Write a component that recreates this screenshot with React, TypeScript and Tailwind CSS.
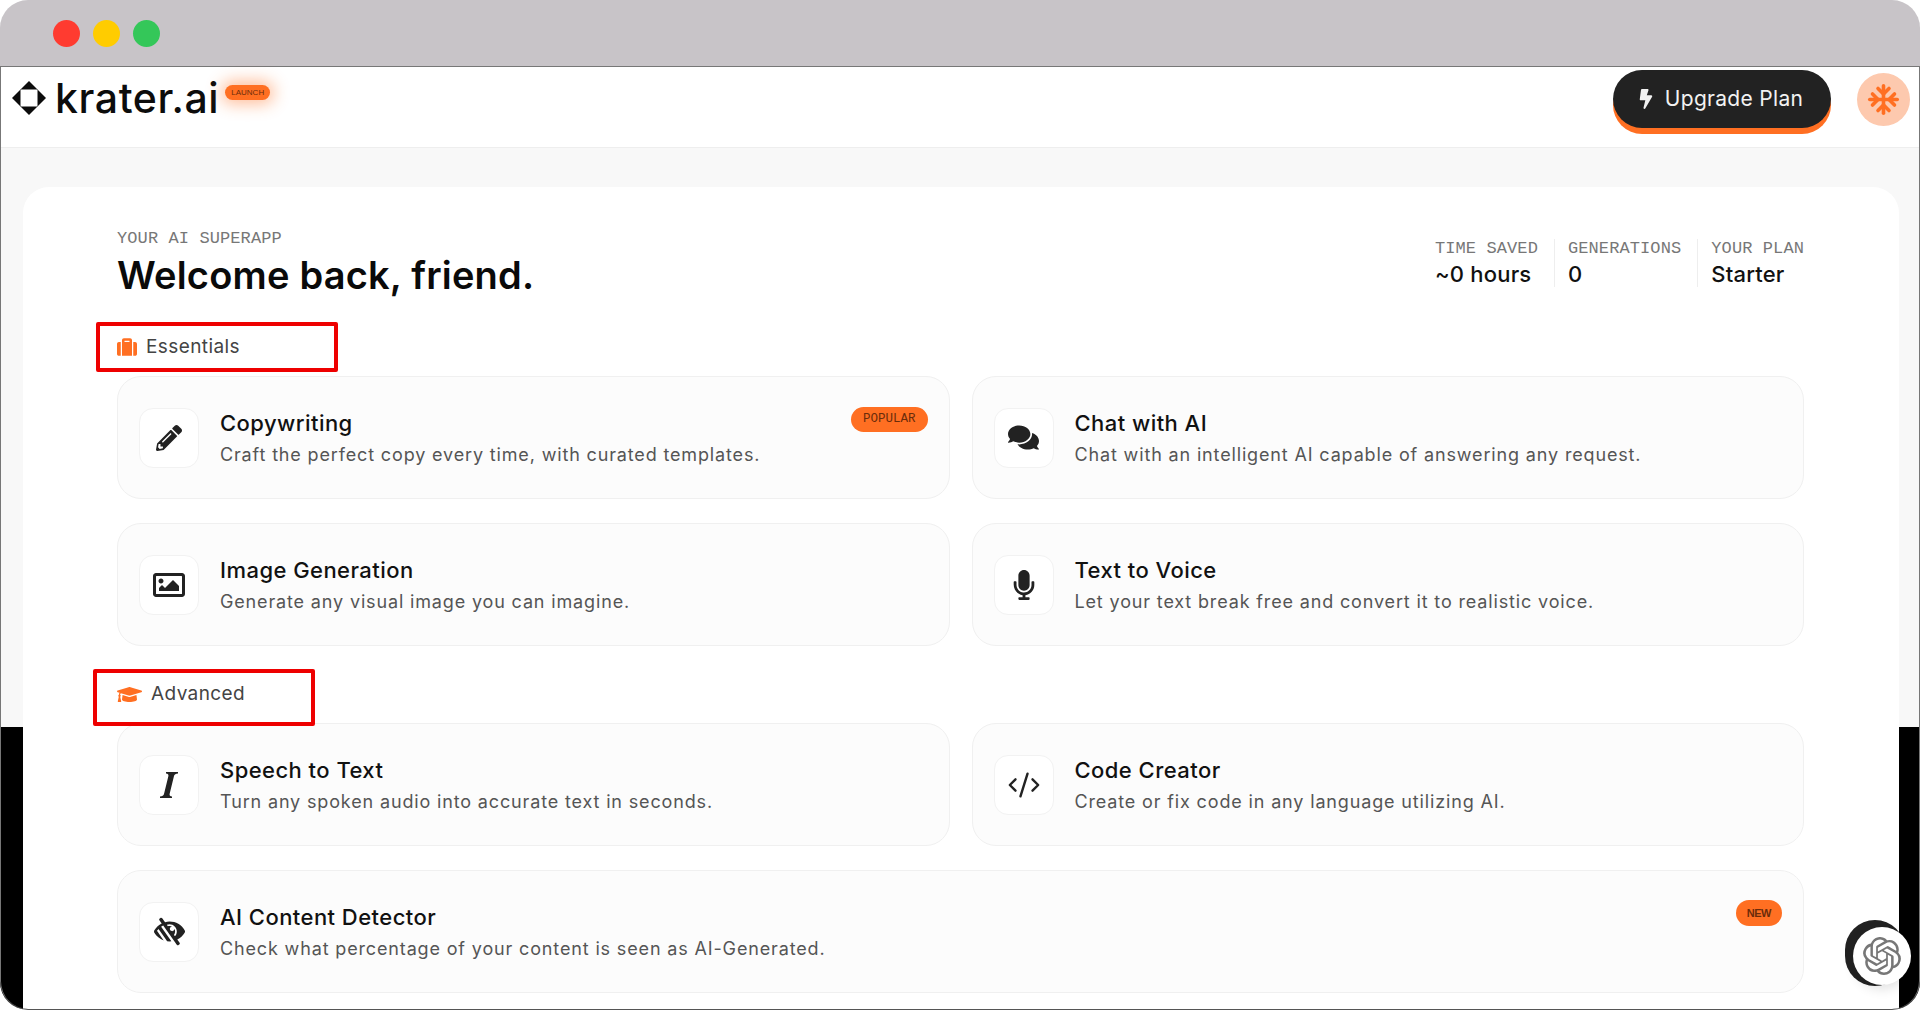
import {
  FaBolt,
  FaComments,
  FaGraduationCap,
  FaLowVision,
  FaMicrophone,
  FaPencilAlt,
  FaRegImage,
  FaSuitcase,
} from "react-icons/fa";
import { LuCodeXml, LuSnowflake } from "react-icons/lu";
import { SiOpenai } from "react-icons/si";
import type { ReactNode } from "react";

interface ToolCardProps {
  icon: ReactNode;
  title: string;
  text: string;
  badge?: string;
  wide?: boolean;
}

function ToolCard({ icon, title, text, badge, wide }: ToolCardProps) {
  return (
    <div
      className={`relative flex h-[123px] items-center gap-[21px] rounded-[24px] border border-[#f0f0f0] bg-[#fcfcfc] pl-[21px] ${
        wide ? "col-span-2" : ""
      }`}
    >
      <div className="flex h-[60px] w-[60px] shrink-0 items-center justify-center rounded-[14px] border border-[#f2f2f2] bg-white text-[#222]">
        {icon}
      </div>
      <div className="flex flex-col pt-[3px]">
        <p className="text-[22px] leading-[30px] font-medium tracking-[0.45px] text-[#111]">{title}</p>
        <p className="mt-[2px] text-[18px] leading-[30px] tracking-[0.85px] text-[#555]">{text}</p>
      </div>
      {badge === "POPULAR" && (
        <span className="absolute top-[30px] right-[21px] rounded-full bg-[#ff6f22] px-[12px] py-[5px] font-['Liberation_Mono',monospace] text-[12.5px] leading-[15px] text-[#6b2c0a]">
          POPULAR
        </span>
      )}
      {badge === "NEW" && (
        <span className="absolute top-[29px] right-[21px] rounded-full bg-[#ff6f22] px-[11px] py-[6px] font-['Liberation_Sans',sans-serif] text-[11px] leading-[14px] font-bold tracking-[-0.5px] text-[#6b2c0a]">
          NEW
        </span>
      )}
    </div>
  );
}

function Stat({ label, value, divider }: { label: string; value: string; divider?: boolean }) {
  return (
    <div className={divider ? "border-l border-[#eee] pl-[13px]" : ""}>
      <p className="font-['Liberation_Mono',monospace] text-[17px] leading-[20px] tracking-[0.1px] text-[#777]">
        {label}
      </p>
      <p className="mt-[3px] text-[22px] leading-[25px] font-medium tracking-[0.2px] text-[#111]">{value}</p>
    </div>
  );
}

function SectionLabel({ icon, label, boxClass }: { icon: ReactNode; label: string; boxClass: string }) {
  return (
    <div className="relative flex h-[34px] items-center gap-[9px] text-[#ff6f22]">
      {icon}
      <span className="text-[19px] tracking-[0.4px] text-[#444]">{label}</span>
      {/* red annotation box drawn over the label */}
      <div className={`absolute z-10 rounded-[2px] border-4 border-[#ee0000] ${boxClass}`} />
    </div>
  );
}

function LogoMark() {
  return (
    <svg width="34" height="34" viewBox="0 0 34 34" className="shrink-0">
      <path d="M17 0 34 17 17 34 0 17Z" fill="#0c0c0c" />
      <rect x="8.5" y="8.5" width="17" height="17" rx="1" fill="#fff" />
    </svg>
  );
}

function ItalicIcon() {
  return (
    <svg width="22" height="32" viewBox="0 0 22 30" fill="#222">
      <path d="M8 2H20V3.4Q16.6 3.7 16 6L11.6 24Q11.2 26.3 14 26.6V28H2V26.6Q5.400 26.300 6 24L10.400 6Q10.800 3.700 8 3.400Z" />
    </svg>
  );
}

export default function App() {
  return (
    <div className="h-[1010px] w-[1920px] overflow-hidden bg-white font-['Inter',sans-serif]">
      <div className="relative flex h-full flex-col overflow-hidden rounded-[28px] border-b border-[#555] bg-[linear-gradient(#f8f8f8_0,#f8f8f8_727px,#000_727px)]">
        {/* Title bar */}
        <div className="flex h-[67px] shrink-0 items-center gap-[13px] border-b border-[#777] bg-[#c8c4c8] pl-[53px]">
          <span className="h-[27px] w-[27px] rounded-full bg-[#ff3b30]" />
          <span className="h-[27px] w-[27px] rounded-full bg-[#ffcc00]" />
          <span className="h-[27px] w-[27px] rounded-full bg-[#34c759]" />
        </div>

        {/* Top bar */}
        <header className="flex h-[81px] shrink-0 items-start justify-between border-b border-[#eee] bg-white pr-[10px] pl-[12px]">
          <div className="flex items-start">
            <div className="mt-[9px] flex items-center gap-[9px]">
              <LogoMark />
              <span className="text-[41px] leading-[44px] font-medium tracking-[0.6px] text-[#0c0c0c]">krater.ai</span>
            </div>
            <span className="mt-[18px] ml-[6px] rounded-full bg-[#ff6f22] px-[6px] py-[3px] font-['Liberation_Sans',sans-serif] text-[8px] leading-[9px] text-[#6b2c0a] shadow-[0_0_16px_4px_rgba(255,111,34,0.45)]">
              LAUNCH
            </span>
          </div>
          <div className="flex items-start gap-[26px]">
            <button className="mt-[3px] flex h-[58px] w-[218px] items-center justify-center gap-[9px] rounded-full bg-[#222] pr-[5px] text-[21px] tracking-[0.3px] text-[#f2f2f2] shadow-[0_6px_0_#ff6f22]">
              <FaBolt size={20} />
              Upgrade Plan
            </button>
            <div className="mt-[6px] flex h-[53px] w-[53px] items-center justify-center rounded-full bg-[#fdc9ae] text-[#ff6f22]">
              <LuSnowflake size={33} strokeWidth={2.6} />
            </div>
          </div>
        </header>

        {/* Main panel */}
        <main className="min-h-0 flex-1 pt-[39px] pr-[21px] pl-[23px]">
          <div className="h-[900px] rounded-t-[26px] bg-white pt-[41px] pr-[95px] pl-[94px]">
            <div className="flex items-start justify-between">
              <div>
                <p className="font-['Liberation_Mono',monospace] text-[17px] leading-[22px] tracking-[0.1px] text-[#777]">
                  YOUR AI SUPERAPP
                </p>
                <h1 className="mt-[2px] text-[38px] leading-[46px] font-semibold tracking-[0.2px] text-[#0a0a0a]">
                  Welcome back, friend.
                </h1>
              </div>
              <div className="mt-[11px] flex gap-[16px]">
                <Stat label="TIME SAVED" value="~0 hours" />
                <Stat label="GENERATIONS" value="0" divider />
                <Stat label="YOUR PLAN" value="Starter" divider />
              </div>
            </div>

            <div className="mt-[32px]">
              <SectionLabel
                icon={<FaSuitcase size={20} />}
                label="Essentials"
                boxClass="top-[-8px] left-[-21px] h-[50px] w-[242px]"
              />
            </div>
            <div className="mt-[12px] grid grid-cols-2 gap-x-[22px] gap-y-[24px]">
              <ToolCard
                icon={<FaPencilAlt size={26} />}
                title="Copywriting"
                text="Craft the perfect copy every time, with curated templates."
                badge="POPULAR"
              />
              <ToolCard
                icon={<FaComments size={31} />}
                title="Chat with AI"
                text="Chat with an intelligent AI capable of answering any request."
              />
              <ToolCard
                icon={<FaRegImage size={32} />}
                title="Image Generation"
                text="Generate any visual image you can imagine."
              />
              <ToolCard
                icon={<FaMicrophone size={30} />}
                title="Text to Voice"
                text="Let your text break free and convert it to realistic voice."
              />
            </div>

            <div className="mt-[31px]">
              <SectionLabel
                icon={<FaGraduationCap size={25} />}
                label="Advanced"
                boxClass="top-[-8px] left-[-24px] h-[57px] w-[222px]"
              />
            </div>
            <div className="mt-[12px] grid grid-cols-2 gap-x-[22px] gap-y-[24px]">
              <ToolCard
                icon={<ItalicIcon />}
                title="Speech to Text"
                text="Turn any spoken audio into accurate text in seconds."
              />
              <ToolCard
                icon={<LuCodeXml size={34} strokeWidth={1.7} />}
                title="Code Creator"
                text="Create or fix code in any language utilizing AI."
              />
              <ToolCard
                wide
                icon={<FaLowVision size={31} />}
                title="AI Content Detector"
                text="Check what percentage of your content is seen as AI-Generated."
                badge="NEW"
              />
            </div>
          </div>
        </main>

        {/* Floating chat button */}
        <div className="absolute right-[15px] bottom-[23px] z-20 h-[66px] w-[60px] rounded-full bg-[#222]" />
        <div className="absolute right-[9px] bottom-[24px] z-20 flex h-[58px] w-[58px] items-center justify-center rounded-full bg-white text-[#777] shadow-[0_4px_12px_rgba(0,0,0,0.12)]">
          <SiOpenai size={38} />
        </div>

        {/* Window edge */}
        <div className="pointer-events-none absolute inset-x-0 top-[67px] bottom-0 rounded-b-[28px] border-x border-[#777]" />
      </div>
    </div>
  );
}
